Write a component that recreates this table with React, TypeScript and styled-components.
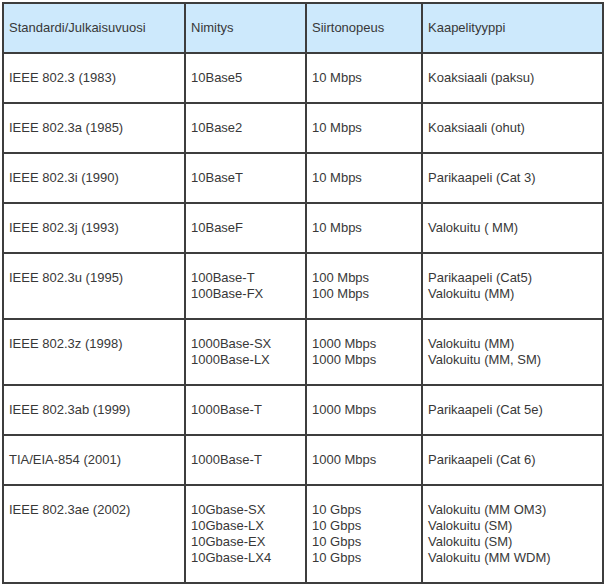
import React from "react";
import styled, { createGlobalStyle } from "styled-components";

const GlobalStyle = createGlobalStyle`
  html, body {
    margin: 0;
    padding: 0;
    background: #ffffff;
  }
  body {
    font-family: "Liberation Sans", Arial, sans-serif;
  }
`;

const Page = styled.div`
  padding: 2px 0 0 2px;
`;

const Table = styled.div`
  display: grid;
  grid-template-columns: 180px 119px 114px 179px;
  gap: 2px;
  padding: 2px;
  width: max-content;
  background: #3d3d3d;
`;

const Cell = styled.div<{ $head?: boolean; $lines: number }>`
  box-sizing: border-box;
  background: ${(p) => (p.$head ? "#cde9fc" : "#ffffff")};
  height: ${(p) => 48 + (p.$lines - 1) * 16}px;
  padding: 16px 4px 0 5px;
  display: flex;
  flex-direction: column;
  font-size: 13px;
  line-height: 16px;
  color: #383838;
  white-space: nowrap;
`;

const head = ["Standardi/Julkaisuvuosi", "Nimitys", "Siirtonopeus", "Kaapelityyppi"];

const rows: string[][][] = [
  [["IEEE 802.3 (1983)"], ["10Base5"], ["10 Mbps"], ["Koaksiaali (paksu)"]],
  [["IEEE 802.3a (1985)"], ["10Base2"], ["10 Mbps"], ["Koaksiaali (ohut)"]],
  [["IEEE 802.3i (1990)"], ["10BaseT"], ["10 Mbps"], ["Parikaapeli (Cat 3)"]],
  [["IEEE 802.3j (1993)"], ["10BaseF"], ["10 Mbps"], ["Valokuitu ( MM)"]],
  [
    ["IEEE 802.3u (1995)"],
    ["100Base-T", "100Base-FX"],
    ["100 Mbps", "100 Mbps"],
    ["Parikaapeli (Cat5)", "Valokuitu (MM)"],
  ],
  [
    ["IEEE 802.3z (1998)"],
    ["1000Base-SX", "1000Base-LX"],
    ["1000 Mbps", "1000 Mbps"],
    ["Valokuitu (MM)", "Valokuitu (MM, SM)"],
  ],
  [["IEEE 802.3ab (1999)"], ["1000Base-T"], ["1000 Mbps"], ["Parikaapeli (Cat 5e)"]],
  [["TIA/EIA-854 (2001)"], ["1000Base-T"], ["1000 Mbps"], ["Parikaapeli (Cat 6)"]],
  [
    ["IEEE 802.3ae (2002)"],
    ["10Gbase-SX", "10Gbase-LX", "10Gbase-EX", "10Gbase-LX4"],
    ["10 Gbps", "10 Gbps", "10 Gbps", "10 Gbps"],
    ["Valokuitu (MM OM3)", "Valokuitu (SM)", "Valokuitu (SM)", "Valokuitu (MM WDM)"],
  ],
];

export default function App() {
  return (
    <>
      <GlobalStyle />
      <Page>
        <Table>
          {head.map((h) => (
            <Cell key={h} $head $lines={1}>
              {h}
            </Cell>
          ))}
          {rows.map((row, i) => {
            const lines = Math.max(...row.map((c) => c.length));
            return row.map((cell, j) => (
              <Cell key={i + "-" + j} $lines={lines}>
                {cell.map((t, k) => (
                  <span key={k}>{t}</span>
                ))}
              </Cell>
            ));
          })}
        </Table>
      </Page>
    </>
  );
}
